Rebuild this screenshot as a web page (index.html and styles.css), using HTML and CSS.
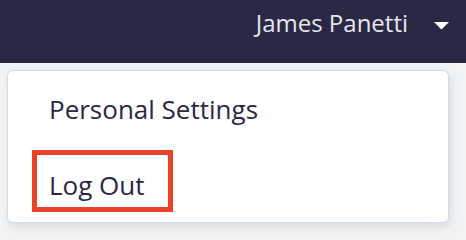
FILE: index.html
```html
<!DOCTYPE html>
<html>
<head>
<meta charset="utf-8">
<link rel="stylesheet" href="styles.css">
</head>
<body>
<header class="topbar">
  <span class="user-name">James Panetti</span>
  <svg class="caret" width="15" height="8" viewBox="0 0 15 8"><path d="M0 0 H15 L7.5 7.5 Z" fill="#ffffff"/></svg>
</header>
<div class="menu-wrap">
  <div class="menu">
    <div class="menu-item">Personal Settings</div>
    <div class="menu-item logout">Log Out</div>
  </div>
</div>
</body>
</html>
```

FILE: styles.css
```css
html, body {
  margin: 0;
  padding: 0;
}
body {
  width: 466px;
  height: 236px;
  background: #f2f3f5;
  font-family: "Open Sans", "Noto Sans", sans-serif;
  overflow: hidden;
}
.topbar {
  height: 63px;
  background: #2a2945;
  display: flex;
  align-items: flex-start;
  justify-content: flex-end;
  padding: 7px 17px 0 0;
  box-sizing: border-box;
}
.user-name {
  color: #e6e6ec;
  font-size: 24px;
  line-height: 32px;
}
.caret {
  display: block;
  margin-left: 26px;
  margin-top: 15px;
}
.menu-wrap {
  padding: 7px 17px 0 7px;
}
.menu {
  background: #ffffff;
  border: 1px solid #cfdbe6;
  border-radius: 6px;
  box-shadow: 2px 4px 10px rgba(0, 0, 0, 0.10);
  height: 153px;
  box-sizing: border-box;
  padding: 20px 0 0 24px;
  display: flex;
  flex-direction: column;
  align-items: flex-start;
}
.menu-item {
  color: #2a2945;
  font-size: 26px;
  line-height: 36px;
  padding-left: 17px;
}
.logout {
  margin-top: 23px;
  border: 5px solid #e8432a;
  width: 141px;
  box-sizing: border-box;
  padding: 12px 0 4px 12px;
}
```
